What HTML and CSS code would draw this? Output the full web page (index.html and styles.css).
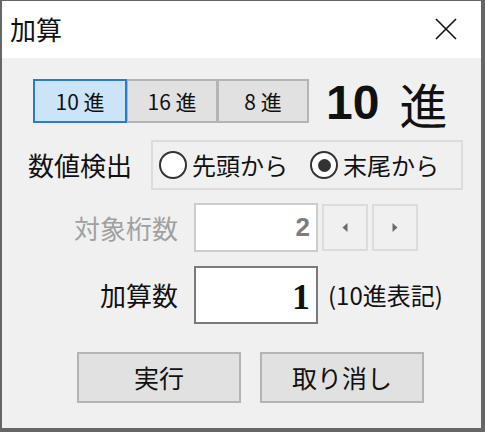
FILE: index.html
```html
<!DOCTYPE html>
<html lang="ja">
  <head>
    <meta charset="UTF-8" />
    <title>加算</title>
    <link rel="stylesheet" href="styles.css">
  </head>
  <body>
    <div class="window">
      <div class="titlebar">
        <span class="title">加算</span>
        <svg class="close" width="22" height="22" viewBox="0 0 22 22">
          <path d="M1 1 L21 21 M21 1 L1 21" stroke="#111" stroke-width="1.6" fill="none" />
        </svg>
      </div>

      <div class="content">
        <div class="row radix-row">
          <div class="seg">
            <button class="seg-btn active">10 進</button>
            <button class="seg-btn">16 進</button>
            <button class="seg-btn">8 進</button>
          </div>
          <div class="radix-label"><b>10</b><span class="radix-kanji">進</span></div>
        </div>

        <div class="row detect-row">
          <span class="detect-label">数値検出</span>
          <div class="groupbox">
            <label class="radio"><span class="dot"></span>先頭から</label>
            <label class="radio checked"><span class="dot"></span>末尾から</label>
          </div>
        </div>

        <div class="row field-row">
          <span class="field-label disabled">対象桁数</span>
          <div class="numbox disabled">2</div>
          <div class="spin">
            <button class="spin-btn">
              <svg width="6" height="9" viewBox="0 0 6 9"><path d="M5.5 0 L0.5 4.5 L5.5 9 Z" fill="#6a6a6a" /></svg>
            </button>
            <button class="spin-btn">
              <svg width="6" height="9" viewBox="0 0 6 9"><path d="M0.5 0 L5.5 4.5 L0.5 9 Z" fill="#6a6a6a" /></svg>
            </button>
          </div>
        </div>

        <div class="row field-row add-row">
          <span class="field-label">加算数</span>
          <div class="numbox big">1</div>
          <span class="note">(10進表記)</span>
        </div>

        <div class="row actions">
          <button class="action">実行</button>
          <button class="action">取り消し</button>
        </div>
      </div>
    </div>
  </body>
</html>
```

FILE: styles.css
```css
html {
  box-sizing: border-box;
}

*,
*::before,
*::after {
  margin: 0;
  padding: 0;
  box-sizing: inherit;
}

body {
  width: 485px;
  height: 432px;
  overflow: hidden;
  background: #666666;
  font-family: "Noto Sans CJK JP", "Noto Sans", sans-serif;
  color: #111;
}

.window {
  margin: 1px 4px 0 2px;
  height: 427px;
  display: flex;
  flex-direction: column;
  background: #f0f0f0;
}

.titlebar {
  height: 57px;
  background: #fff;
  display: flex;
  align-items: center;
  justify-content: space-between;
  padding: 0 24px 2px 8px;
}

.title {
  font-size: 26px;
  line-height: 1;
}

.close {
  display: block;
}

.content {
  flex: 1;
  padding-top: 21px;
  display: flex;
  flex-direction: column;
}

.row {
  display: flex;
  align-items: center;
}

/* radix selector */
.radix-row {
  padding-left: 31px;
  height: 44px;
}

.seg {
  display: flex;
}

.seg-btn {
  width: 92px;
  height: 44px;
  font-family: inherit;
  font-size: 21px;
  line-height: 1;
  color: #111;
  background: #e1e1e1;
  border: 2px solid #b4b4b4;
  margin-left: -1px;
}

.seg-btn.active {
  width: 94px;
  margin-left: 0;
  background: #cce4f7;
  border-color: #2b7bc8;
  position: relative;
}

.radix-label {
  margin-left: 17px;
  height: 44px;
  display: flex;
  align-items: center;
  white-space: nowrap;
  padding-top: 4px;
}

.radix-label b {
  font-family: "Liberation Sans", sans-serif;
  font-size: 48px;
  line-height: 1;
  font-weight: 700;
}

.radix-kanji {
  margin-left: 20px;
  font-size: 48px;
  line-height: 1;
}

/* detection */
.detect-row {
  margin-top: 17px;
  padding-left: 26px;
}

.detect-label {
  width: 123px;
  font-size: 26px;
  line-height: 1;
}

.groupbox {
  width: 312px;
  height: 50px;
  border: 2px solid #dcdcdc;
  display: flex;
  align-items: center;
  padding-left: 6px;
  gap: 22px;
}

.radio {
  display: flex;
  align-items: center;
  font-size: 24px;
  line-height: 1;
  gap: 5px;
}

.dot {
  width: 28px;
  height: 28px;
  border-radius: 50%;
  border: 2px solid #333;
  background: #fff;
  display: flex;
  align-items: center;
  justify-content: center;
}

.radio.checked .dot::after {
  content: "";
  width: 13px;
  height: 13px;
  border-radius: 50%;
  background: #333;
}

/* numeric fields */
.field-row {
  margin-top: 13px;
}

.field-label {
  width: 176px;
  text-align: right;
  font-size: 26px;
  line-height: 1;
  margin-right: 16px;
}

.field-label.disabled {
  color: #a0a0a0;
}

.numbox {
  width: 124px;
  height: 49px;
  background: #fff;
  border: 2px solid #cccccc;
  text-align: right;
  padding: 0 6px;
  font-family: "Liberation Sans", sans-serif;
  font-weight: 700;
  font-size: 26px;
  line-height: 45px;
}

.numbox.disabled {
  color: #7d7d7d;
}

.numbox.big {
  height: 58px;
  border-color: #7a7a7a;
  font-family: "Liberation Serif", serif;
  font-size: 36px;
  line-height: 58px;
}

.spin {
  display: flex;
  gap: 4px;
  margin-left: 4px;
}

.spin-btn {
  width: 46px;
  height: 47px;
  background: #f0f0f0;
  border: 2px solid #dcdcdc;
  display: flex;
  align-items: center;
  justify-content: center;
}

.add-row {
  margin-top: 14px;
}

.note {
  margin-left: 10px;
  font-size: 24px;
  line-height: 1;
}

/* dialog buttons */
.actions {
  margin-top: 28px;
  padding-left: 75px;
  gap: 19px;
}

.action {
  width: 164px;
  height: 51px;
  background: #e1e1e1;
  border: 2px solid #b4b4b4;
  font-family: inherit;
  font-size: 25px;
  line-height: 1;
  color: #111;
}
```
